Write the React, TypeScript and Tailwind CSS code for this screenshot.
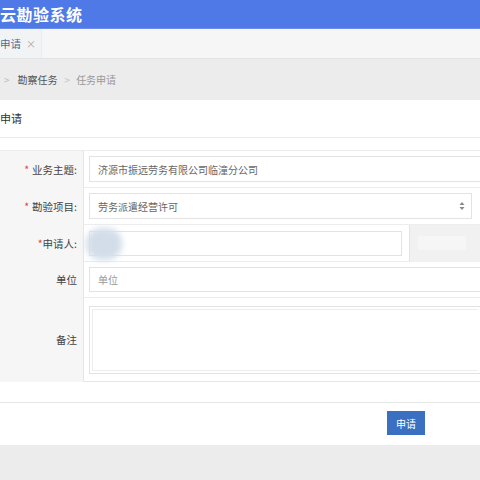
import React from "react";

const font = { fontFamily: '"Noto Sans CJK SC", "Noto Sans", sans-serif' };

function Label({ text, star, tight }: { text: string; star?: boolean; tight?: boolean }) {
  return (
    <div className="flex items-center justify-end pr-[6px] bg-[#f6f6f6] border-r border-[#e6e6e6] text-[10.5px] text-[#444]">
      {star && <span className={tight ? "text-[#d44]" : "text-[#d44] mr-[3px]"}>*</span>}
      {text}
    </div>
  );
}

export default function App() {
  return (
    <div className="w-[480px] h-[480px] overflow-hidden bg-[#ececec]" style={font}>
      <div className="h-[29px] bg-[#4e79e6] border-b border-[#6a8ee6] flex items-center">
        <span className="text-white font-bold text-[16px] tracking-[0.5px]">云勘验系统</span>
      </div>

      <div className="h-[29px] bg-[#f6f6f6] flex">
        <div className="w-[42px] bg-[#f2f3f4] border-r border-[#ebebeb] flex items-center">
          <span className="text-[10.5px] text-[#4a6c99]">申请</span>
          <span className="ml-[5px] text-[10px] text-[#aaa]">×</span>
        </div>
      </div>

      <div className="h-[42px] bg-[#ececec] border-t border-[#e4e4e4] flex items-center text-[10px]">
        <span className="ml-[4px] text-[#bbb]">&gt;</span>
        <span className="ml-[8px] text-[#555]">勘察任务</span>
        <span className="ml-[7px] text-[#c4c4c4]">&gt;</span>
        <span className="ml-[6px] text-[#999]">任务申请</span>
      </div>

      <div className="bg-white h-[345px]">
        <div className="h-[38px] border-b border-[#ebebeb] flex items-center">
          <span className="text-[11px] text-[#333]">申请</span>
        </div>

        <div className="mt-[12px] border-t border-[#ededed] grid grid-cols-[84px_1fr]">
          <Label text="业务主题:" star />
          <div className="h-[37px] flex items-center pl-[5px] border-b border-[#ededed]">
            <div className="h-[26px] w-full border border-[#e3e3e3] border-r-0 flex items-center pl-[8px] text-[10px] text-[#666]">
              济源市振远劳务有限公司临潼分公司
            </div>
          </div>

          <Label text="勘验项目:" star />
          <div className="h-[37px] flex items-center pl-[5px] pr-[8px] border-b border-[#ededed]">
            <div className="h-[26px] w-full border border-[#e3e3e3] flex items-center pl-[8px] pr-[6px] text-[10px] text-[#666]">
              <span className="flex-1">劳务派遣经营许可</span>
              <svg width="6" height="10" viewBox="0 0 6 10">
                <path d="M3 1 L5.5 4 H0.5 Z" fill="#888" />
                <path d="M3 9 L5.5 6 H0.5 Z" fill="#888" />
              </svg>
            </div>
          </div>

          <Label text="申请人:" star tight />
          <div className="h-[37px] flex items-center border-b border-[#ededed]">
            <div className="relative ml-[5px] h-[25px] w-[313px] border border-[#e3e3e3]">
              <div className="absolute -left-[4px] -top-[4px] w-[36px] h-[32px] rounded-[45%] bg-[#d3dde9] blur-[3px]" />
            </div>
            <div className="ml-[7px] h-[37px] flex-1 border-l border-[#e4e4e4] bg-[#f1f1f1] flex items-center pl-[8px]">
              <div className="h-[14px] w-[48px] bg-[#f6f6f6]" />
            </div>
          </div>

          <Label text="单位" />
          <div className="h-[36px] flex items-center pl-[5px] border-b border-[#ededed]">
            <div className="h-[25px] w-full border border-[#e3e3e3] border-r-0 flex items-center pl-[8px] text-[10px] text-[#999]">
              单位
            </div>
          </div>

          <Label text="备注" />
          <div className="h-[84px] flex items-center pl-[5px] border-b border-[#e6e6e6]">
            <div className="h-[68px] w-full border border-[#e3e3e3] border-r-0 p-[2px]">
              <div className="h-full w-full border border-[#ededed] border-r-0" />
            </div>
          </div>
        </div>

        <div className="h-[21px] border-b border-[#e6e6e6]" />

        <div className="flex justify-end pr-[55px] pt-[8px]">
          <button className="h-[24px] w-[38px] bg-[#3a6fc2] text-white text-[10px]">申请</button>
        </div>
      </div>
    </div>
  );
}
